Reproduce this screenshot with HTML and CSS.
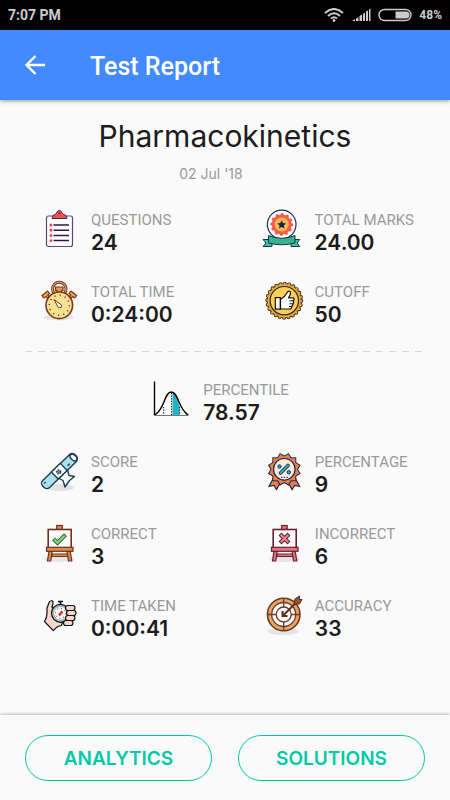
FILE: index.html
```html
<!DOCTYPE html>
<html lang="en">

<head>
    <meta charset="UTF-8">
    <meta name="viewport" content="width=device-width, initial-scale=1.0">
    <title>Test Report</title>
    <link rel="stylesheet" href="styles.css">
</head>

<body>
    <div class="status-bar">
        <span class="clock">7:07 PM</span>
        <div class="status-icons">
            <svg width="20" height="14" viewBox="0 0 20 14" fill="none" stroke="#ccc" stroke-width="2">
                <path d="M1 5Q10-3 19 5M4 8Q10 2.500 16 8M7 10.500Q10 8 13 10.500"/>
                <circle cx="10" cy="12.500" r="1.400" fill="#ccc" stroke="none"/>
            </svg>
            <svg width="20" height="14" viewBox="0 0 20 14" fill="#ccc">
                <path d="M1 13l3-2v2zM5 10.500l2.500-1.200V13H5zM8.500 8l2.500-1.500V13H8.500zM12 6l2-1.500V13h-2zM15 3.500l2-1V13h-2zM18 1.500l1.500-1V13H18z"/>
            </svg>
            <svg width="34" height="14" viewBox="0 0 34 14">
                <rect x="1" y="1.500" width="32" height="11" rx="5.500" fill="none" stroke="#ccc" stroke-width="1.400"/>
                <path d="M17.500 3.500h10.500a3.500 3.500 0 0 1 0 7H17.500z" fill="#ccc"/>
            </svg>
            <span class="battery">48%</span>
        </div>
    </div>

    <header class="app-bar">
        <button class="back" type="button" aria-label="Back">
            <svg width="22" height="22" viewBox="0 0 22 22" fill="none" stroke="#fff" stroke-width="2.400">
                <path d="M21 11H3M11.500 2L2.500 11l9 9"/>
            </svg>
        </button>
        <h1>Test Report</h1>
    </header>

    <main class="report">
        <h2>Pharmacokinetics</h2>
        <p class="date">02 Jul '18</p>

        <dl class="stats">
            <div class="stat">
                <svg class="icon" viewBox="0 0 38 38">
                    <rect x="5.500" y="6" width="26" height="30.500" rx="2" fill="#fff" stroke="#5b4680" stroke-width="1.200"/>
                    <path d="M11 8.500Q11 5 14 4.500Q15.500 4 16 2Q18.300-1.500 20.700 2Q21 4 23 4.500Q26 5 26 8.500z" fill="#f05050" stroke="#4c2a57"/>
                    <circle cx="18.400" cy="3" r="1" fill="#4c2a57"/>
                    <path d="M12.500 15h15.500M12.500 20.300h15.500M12.500 25.500h15.500M12.500 30.600h15.500" stroke="#2c1458" stroke-width="1.500"/>
                    <path d="M8.700 15h2.500M8.700 20.300h2.500M8.700 25.500h2.500M8.700 30.600h2.500" stroke="#f5333f" stroke-width="2.400"/>
                </svg>
                <dt>QUESTIONS</dt>
                <dd>24</dd>
            </div>
            <div class="stat">
                <svg class="icon" viewBox="0 0 38 38">
                    <circle cx="16.700" cy="14.500" r="14.300" fill="#fff" stroke="#1e2d5a" stroke-width="1.200"/>
                    <path d="M-2 29.500H7V36.500H-2L1 33zM34.700 29.500H26V36.500h8.700L32 33z" fill="#3fc79a" stroke="#1e2d5a"/>
                    <path d="M3.500 25.500Q16.700 31 30 25.500V33Q16.700 36.500 3.500 33z" fill="#35b58a" stroke="#1e2d5a"/>
                    <circle cx="16.700" cy="14.500" r="10" fill="#f45d4c"/>
                    <circle cx="16.700" cy="14.500" r="10.200" fill="none" stroke="#f45d4c" stroke-width="2.600" stroke-linecap="round" stroke-dasharray="0.500 4.841"/>
                    <circle cx="16.700" cy="14.500" r="7" fill="#fcb653"/>
                    <path d="M16.700 10.200l1.300 2.900 3.100.300-2.300 2.100.700 3.100-2.800-1.600-2.800 1.600.700-3.100-2.300-2.100 3.100-.300z" fill="#14264f"/>
                </svg>
                <dt>TOTAL MARKS</dt>
                <dd>24.00</dd>
            </div>
            <div class="stat">
                <svg class="icon" viewBox="0 0 38 38">
                    <ellipse cx="17.700" cy="35.500" rx="15" ry="3" fill="#e4e4e4"/>
                    <circle cx="18.300" cy="7" r="6.800" fill="none" stroke="#7b3717" stroke-width="3"/>
                    <circle cx="18.300" cy="7" r="6.800" fill="none" stroke="#e9b48f" stroke-width="1"/>
                    <path d="M14.500 5h7.500v3.500h-1.500v3h-4.500V8.500h-1.500z" fill="#dba14f" stroke="#7b3717" stroke-width="1.200"/>
                    <g fill="#e3a95b" stroke="#7b3717" stroke-width="1.200">
                        <path d="M1 13.500l5.500-4.500 2 2.500-1.800 1.500 2.500 3-1.700 1.500-2.500-3-2 1.500z"/>
                        <path d="M35.600 13.500l-5.500-4.500-2 2.500 1.800 1.500-2.500 3 1.700 1.500 2.500-3 2 1.500z"/>
                    </g>
                    <circle cx="18.300" cy="23.300" r="13.300" fill="#f5e192" stroke="#7b3717" stroke-width="1.600"/>
                    <circle cx="18.300" cy="23.300" r="10" fill="none" stroke="#7b3717" stroke-width="1.500" stroke-dasharray="1.200 4.036"/>
                    <path d="M13 17.500l7.500 5.500-.500 2.800-2.800-.500z" fill="#fff" stroke="#7b3717" stroke-linejoin="round"/>
                </svg>
                <dt>TOTAL TIME</dt>
                <dd>0:24:00</dd>
            </div>
            <div class="stat">
                <svg class="icon" viewBox="0 0 38 38">
                    <g stroke-linecap="round" stroke-dasharray="0 4.451">
                        <circle cx="19.300" cy="18.700" r="17" fill="#efac35" stroke="#3a2c20" stroke-width="4"/>
                        <circle cx="19.300" cy="18.700" r="16.600" fill="#efac35"/>
                        <circle cx="19.300" cy="18.700" r="17" fill="none" stroke="#efac35" stroke-width="2.200"/>
                    </g>
                    <circle cx="19.300" cy="18.700" r="17" fill="none" stroke="#3a2c20" stroke-width="1.200" stroke-dasharray="0.900 3.551" stroke-dashoffset="-1.800"/>
                    <circle cx="19.300" cy="18.700" r="14.200" fill="#fbd05a" stroke="#2b2621" stroke-width="1.200"/>
                    <path d="M10.300 15.700h5v11.500h-5z" fill="#fff" stroke="#111" stroke-width="1.200"/>
                    <path d="M15.500 17.500Q20 15 22.500 10Q25.500 8 25.500 11Q25.500 13 23.500 15.800H28.500Q30 17.500 28 18.800Q29.500 20.500 27.700 21.800Q28.500 23.500 26.500 24.500Q27 27 24.500 27H15.500z" fill="#fff" stroke="#111" stroke-width="1.200" stroke-linejoin="round"/>
                    <path d="M24.500 18.800H28M24.500 21.800h3.200M24 24.500h2.500" stroke="#111"/>
                </svg>
                <dt>CUTOFF</dt>
                <dd>50</dd>
            </div>
        </dl>

        <div class="divider"></div>

        <dl class="stats-single">
            <div class="stat">
                <svg class="icon" viewBox="0 0 38 38">
                    <path d="M19.500 12.200C23.500 12.500 24.500 20 26.500 26.500V35H19.500z" fill="#21b5c6"/>
                    <path d="M1.300 35C12 30 11 12 18.300 12S25 29 35.300 35" fill="none" stroke="#000" stroke-width="1.400"/>
                    <path d="M1.500 1.500V35.300" stroke="#000" stroke-width="1.400"/>
                    <path d="M1 35.500H35.500" stroke="#777"/>
                    <path d="M10.700 27v8M18.600 13v22M26.600 27v8" stroke="#000" stroke-dasharray="1.300 1.300"/>
                </svg>
                <dt>PERCENTILE</dt>
                <dd>78.57</dd>
            </div>
        </dl>

        <dl class="stats">
            <div class="stat">
                <svg class="icon" viewBox="0 0 38 38">
                    <ellipse cx="19" cy="35.500" rx="14" ry="3.500" fill="#e2e2e2"/>
                    <g stroke="#1d3c52" stroke-width="1.400" stroke-linejoin="round">
                        <path d="M14.500 24.500L25.500 14 28 23.500 33.500 24.500 28.500 28.500 24 35 22 28.500z" fill="#fff"/>
                        <g transform="rotate(-44 18.300 19.200)">
                            <rect x="-4" y="14.300" width="45" height="9.800" rx="4" fill="#ace0ef"/>
                            <path d="M12 14.300h12.500v9.800H12z" fill="#fff"/>
                            <ellipse cx="38" cy="19.200" rx="2.500" ry="4" fill="#fff"/>
                            <path d="M-1 17.500h2M28 21h3"/>
                        </g>
                        <circle cx="17.600" cy="19.900" r="2" fill="#5d94a8" stroke-dasharray="1.500 1"/>
                    </g>
                </svg>
                <dt>SCORE</dt>
                <dd>2</dd>
            </div>
            <div class="stat">
                <svg class="icon" viewBox="0 0 38 38">
                    <path d="M9 25L4 34.500l5-1 2.500 4 5-9zM29.600 25l5 9.500-5-1-2.500 4-5-9z" fill="#f47d4a" stroke="#172b50" stroke-width="1.200"/>
                    <g fill="#f47d4a" stroke="#172b50" stroke-width="2">
                        <rect x="8.300" y="6.300" width="22" height="22"/>
                        <rect x="8.300" y="6.300" width="22" height="22" transform="rotate(30 19.300 17.300)"/>
                        <rect x="8.300" y="6.300" width="22" height="22" transform="rotate(60 19.300 17.300)"/>
                    </g>
                    <g fill="#f47d4a">
                        <rect x="8.300" y="6.300" width="22" height="22"/>
                        <rect x="8.300" y="6.300" width="22" height="22" transform="rotate(30 19.300 17.300)"/>
                        <rect x="8.300" y="6.300" width="22" height="22" transform="rotate(60 19.300 17.300)"/>
                    </g>
                    <circle cx="19.300" cy="17.300" r="10.800" fill="#fdeadb" stroke="#172b50" stroke-width="1.200"/>
                    <path d="M15.500 21L23 13.500" stroke="#172b50" stroke-width="3.600" stroke-linecap="round"/>
                    <path d="M15.500 21L23 13.500" stroke="#28b4ba" stroke-width="1.800" stroke-linecap="round"/>
                    <g fill="#28b4ba" stroke="#172b50">
                        <circle cx="14.500" cy="14.500" r="1.700"/>
                        <circle cx="23.800" cy="20.300" r="1.700"/>
                    </g>
                    <path d="M16 25.300h7" stroke="#172b50" stroke-dasharray="1.500 1.200"/>
                </svg>
                <dt>PERCENTAGE</dt>
                <dd>9</dd>
            </div>
            <div class="stat">
                <svg class="icon" viewBox="0 0 38 38">
                    <ellipse cx="18.500" cy="35" rx="15" ry="3" fill="#e6e6e6"/>
                    <g fill="#dd8d52" stroke="#70301b" stroke-width="1.200">
                        <rect x="15.700" y="1.500" width="5.500" height="5"/>
                        <path d="M11 30h16v2.500H11z"/>
                        <path d="M8 27h3.200l-1.500 10H6.500zM26 27h3.200l1.600 10h-3.300z"/>
                        <rect x="7.200" y="5.500" width="23" height="19" fill="#fff" stroke-width="1.600"/>
                        <rect x="5.500" y="23.300" width="26.500" height="4"/>
                    </g>
                    <path d="M12.500 15l4 3.800 8-8" fill="none" stroke="#2c6a35" stroke-width="4.200"/>
                    <path d="M13.200 15.600l3.300 3.200 7.300-7.300" fill="none" stroke="#86d982" stroke-width="2.200"/>
                </svg>
                <dt>CORRECT</dt>
                <dd>3</dd>
            </div>
            <div class="stat">
                <svg class="icon" viewBox="0 0 38 38">
                    <ellipse cx="19.500" cy="35" rx="15" ry="3" fill="#e4e4e8"/>
                    <g fill="#e2777b" stroke="#6b1f32" stroke-width="1.200">
                        <rect x="16.700" y="1.500" width="5.500" height="5"/>
                        <path d="M12 30h16v2.500H12z"/>
                        <path d="M9 27h3.200l-1.500 10H7.500zM27 27h3.200l1.600 10h-3.300z"/>
                        <rect x="8.200" y="5.500" width="23" height="19" fill="#fff" stroke-width="1.600"/>
                        <rect x="6.500" y="23.300" width="26.500" height="4"/>
                    </g>
                    <path d="M16.500 11.500l6 6M22.500 11.500l-6 6" stroke="#6b1f32" stroke-width="4.200" stroke-linecap="square"/>
                    <path d="M16.500 11.500l6 6M22.500 11.500l-6 6" stroke="#e8838b" stroke-width="2.200" stroke-linecap="square"/>
                </svg>
                <dt>INCORRECT</dt>
                <dd>6</dd>
            </div>
            <div class="stat">
                <svg class="icon" viewBox="0 0 38 38">
                    <g fill="#f5d8cc" stroke="#111" stroke-width="1.200" stroke-linejoin="round">
                        <path d="M6 12L8.500 5.500Q12.500 3.500 12 7L11 11 22 24 20.500 29.500Q16 30 12.300 34.700L3.500 25.500Q6 22 6 17z"/>
                        <circle cx="19.500" cy="17.300" r="9" fill="#a7b7bf"/>
                        <circle cx="19.500" cy="17.300" r="6.300" fill="#fff" stroke="none"/>
                        <path d="M17 5.500h5M19.500 5.500v3" fill="none" stroke-width="1.600"/>
                        <rect x="24.500" y="9.500" width="9.500" height="5" rx="2.500"/>
                        <rect x="25.500" y="14.500" width="9.500" height="5" rx="2.500"/>
                        <rect x="24.500" y="19.500" width="9.500" height="5" rx="2.500"/>
                        <rect x="22.500" y="24.500" width="9.500" height="5" rx="2.500"/>
                    </g>
                    <circle cx="19.500" cy="17.300" r="5" fill="none" stroke="#222" stroke-dasharray="1 2.927"/>
                    <path d="M18 19.300l3.500-4" stroke="#f03024" stroke-width="2.600"/>
                </svg>
                <dt>TIME TAKEN</dt>
                <dd>0:00:41</dd>
            </div>
            <div class="stat">
                <svg class="icon" viewBox="0 0 38 38">
                    <ellipse cx="18" cy="35.500" rx="15.500" ry="3.500" fill="#e4e4e4"/>
                    <g fill="#fff" stroke="#6f3b1f" stroke-width="1.300">
                        <circle cx="18.700" cy="18.500" r="16.300" fill="#e9a567" stroke-width="1.600"/>
                        <circle cx="18.700" cy="18.500" r="12"/>
                        <circle cx="18.700" cy="18.500" r="7.500"/>
                        <path d="M18.700 2.500v9M18.700 26v8.500M2.500 18.500h9M26 18.500h8.500"/>
                    </g>
                    <path d="M18 19.500L35 3M17.500 15v5h5" fill="none" stroke="#57301f" stroke-width="2"/>
                    <path d="M29 8l1-5 4.500-3v3.500H37L34.500 8z" fill="#8f5434" stroke="#57301f"/>
                </svg>
                <dt>ACCURACY</dt>
                <dd>33</dd>
            </div>
        </dl>
    </main>

    <footer class="actions">
        <button type="button">ANALYTICS</button>
        <button type="button">SOLUTIONS</button>
    </footer>
</body>

</html>
```

FILE: styles.css
```css
* {
    box-sizing: border-box;
}

body {
    margin: 0;
    min-height: 100vh;
    display: flex;
    flex-direction: column;
    background-color: #fafafa;
    color: #1c1c1c;
    font-family: Roboto, Arial, sans-serif;
}

h1, h2, p, dl, dd {
    margin: 0;
}

/* Status bar */
.status-bar {
    display: flex;
    align-items: center;
    justify-content: space-between;
    height: 30px;
    padding: 0 8px;
    background-color: #000;
    color: #ccc;
    font-weight: 700;
}

.clock {
    font-size: 14px;
}

.status-icons {
    display: flex;
    align-items: center;
    gap: 7px;
}

.battery {
    font-size: 12px;
}

/* App bar */
.app-bar {
    display: flex;
    align-items: center;
    gap: 42px;
    height: 70px;
    padding: 0 24px;
    background-color: #448aff;
    color: #fff;
    box-shadow: 0 1px 4px rgba(0, 0, 0, 0.4);
}

.app-bar h1 {
    padding-top: 2px;
    font-size: 25px;
    font-weight: 500;
}

.back {
    display: flex;
    width: 24px;
    padding: 0;
    border: none;
    background: none;
    cursor: pointer;
}

/* Report */
.report {
    flex: 1;
    padding: 18px 25px;
}

.report h2 {
    font-family: Inter, Arial, sans-serif;
    font-size: 30px;
    font-weight: 400;
    line-height: 36px;
    text-align: center;
}

.date {
    margin-top: 10px;
    padding-right: 28px;
    color: #999;
    font-family: Inter, Arial, sans-serif;
    font-size: 14px;
    line-height: 20px;
    text-align: center;
}

.stats {
    display: grid;
    grid-template-columns: 3fr 2fr;
    row-gap: 26px;
    padding: 0 11px 0 16px;
}

.date + .stats {
    margin-top: 25px;
}

.stats-single {
    display: flex;
    justify-content: center;
    margin: 27px 0 26px;
    padding-right: 8px;
}

.stat {
    display: grid;
    grid-template-columns: 38px auto;
    grid-template-rows: 22px 24px;
    column-gap: 12px;
    justify-content: start;
    white-space: nowrap;
}

.icon {
    grid-row: span 2;
    width: 38px;
    height: 38px;
    margin-top: 1px;
    overflow: visible;
}

.stat dt {
    color: #999;
    font-size: 15px;
    line-height: 22px;
}

.stat dd {
    font-family: Inter, Arial, sans-serif;
    font-size: 21px;
    font-weight: 600;
    line-height: 24px;
}

.divider {
    height: 1px;
    margin-top: 24px;
    background: repeating-linear-gradient(to right, #d6d6d6 0 7px, transparent 7px 13px);
}

/* Bottom buttons */
.actions {
    display: flex;
    gap: 26px;
    padding: 20px 25px 19px;
    box-shadow: 0 -1px 3px rgba(0, 0, 0, 0.25);
}

.actions button {
    flex: 1;
    height: 46px;
    border: 1px solid #00c9a7;
    border-radius: 23px;
    background: none;
    color: #00c9a7;
    font-family: Inter, Arial, sans-serif;
    font-size: 19px;
    font-weight: 600;
    cursor: pointer;
}
```
